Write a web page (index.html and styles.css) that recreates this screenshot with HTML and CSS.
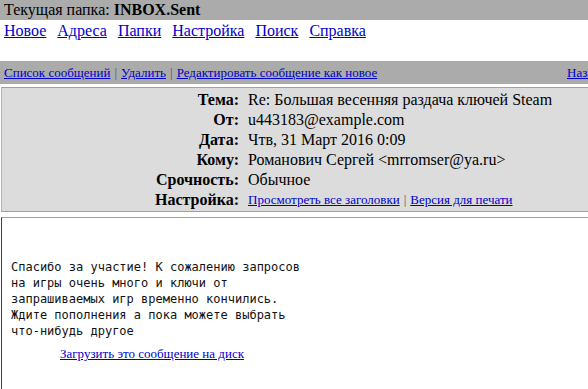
FILE: index.html
```
<!DOCTYPE html>
<html lang="ru">
<head>
<meta charset="utf-8">
<title>INBOX.Sent</title>
<link rel="stylesheet" href="styles.css">
</head>
<body>
<div class="page">
  <div class="topbar">Текущая папка: <b>INBOX.Sent</b></div>
  <nav class="menu">
    <a href="#">Новое</a>
    <a href="#">Адреса</a>
    <a href="#">Папки</a>
    <a href="#">Настройка</a>
    <a href="#">Поиск</a>
    <a href="#">Справка</a>
  </nav>
  <div class="actions">
    <div class="actions-left">
      <a href="#">Список сообщений</a><span class="sep">|</span><a href="#">Удалить</a><span class="sep">|</span><a href="#">Редактировать сообщение как новое</a>
    </div>
    <div class="actions-right">
      <a href="#">Назад</a><span class="sep">|</span><a href="#">Вперёд</a>
    </div>
  </div>
  <div class="headers">
    <div class="label">Тема:</div><div class="value">Re: Большая весенняя раздача ключей Steam</div>
    <div class="label">От:</div><div class="value">u443183@example.com</div>
    <div class="label">Дата:</div><div class="value">Чтв, 31 Март 2016 0:09</div>
    <div class="label">Кому:</div><div class="value">Романович Сергей &lt;mrromser@ya.ru&gt;</div>
    <div class="label">Срочность:</div><div class="value">Обычное</div>
    <div class="label">Настройка:</div><div class="value small"><a href="#">Просмотреть все заголовки</a><span class="sep">|</span><a href="#">Версия для печати</a></div>
  </div>
  <div class="message">
<pre class="text">Спасибо за участие! К сожалению запросов
на игры очень много и ключи от
запрашиваемых игр временно кончились.
Ждите пополнения а пока можете выбрать
что-нибудь другое</pre>
    <div class="download"><a href="#">Загрузить это сообщение на диск</a></div>
  </div>
</div>
</body>
</html>
```
FILE: styles.css
```
html, body {
  margin: 0;
  padding: 0;
  background: #fff;
  overflow: hidden;
}
body {
  font-family: "Liberation Serif", "Times New Roman", serif;
  font-size: 16px;
  color: #000;
}
a {
  color: #0000cc;
  text-decoration: underline;
}
.page {
  width: 588px;
  height: 389px;
  overflow: hidden;
}
.topbar {
  background: #ababab;
  height: 20px;
  line-height: 20px;
  padding-left: 4px;
  white-space: nowrap;
}
.menu {
  display: flex;
  gap: 11px;
  padding-left: 4px;
  height: 21px;
  line-height: 21px;
  margin-bottom: 20px;
}
.actions {
  background: #ababab;
  height: 23px;
  line-height: 23px;
  padding-left: 4px;
  display: flex;
  font-size: 13px;
  white-space: nowrap;
  width: 700px;
  margin-bottom: 3px;
}
.actions-left {
  flex: 0 0 563px;
}
.sep {
  color: #555;
  margin: 0 4px;
}
.headers {
  margin-left: 1px;
  border-top: 1px solid #a0a0a0;
  border-left: 1px solid #b4b4b4;
  border-bottom: 1px solid #a0a0a0;
  background: #dcdcdc;
  display: grid;
  grid-template-columns: 237px 1fr;
  column-gap: 9px;
  padding: 2px 0 1px;
  white-space: nowrap;
}
.label {
  font-weight: bold;
  text-align: right;
  height: 20px;
  line-height: 20px;
}
.value {
  height: 20px;
  line-height: 20px;
}
.value.small {
  font-size: 13px;
}
.message {
  margin-top: 5px;
  margin-left: 1px;
  border-top: 1px solid #a0a0a0;
  border-left: 1px solid #404040;
  height: 200px;
  padding-top: 41px;
}
.text {
  margin: 0 0 0 9px;
  font-family: "DejaVu Sans Mono", monospace;
  font-size: 12px;
  line-height: 16px;
  color: #111;
}
.download {
  margin-top: 7px;
  padding-left: 58px;
  font-size: 13px;
}
```
